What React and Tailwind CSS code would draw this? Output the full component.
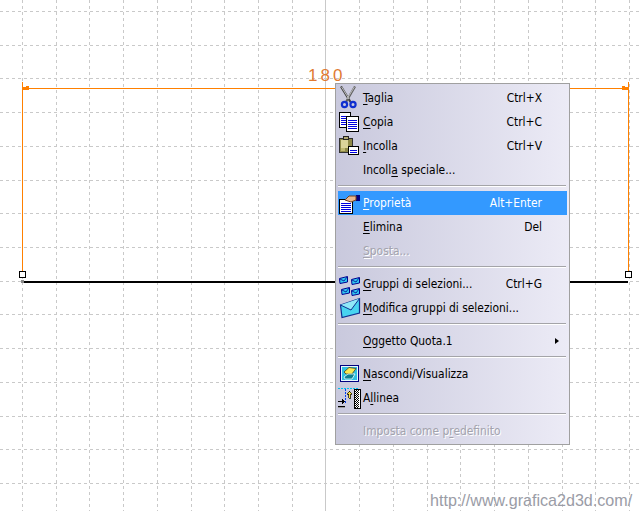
import React from "react";

const STEP = 33.72;
const vLines = Array.from({ length: 19 }, (_, i) => Math.round(22 + i * STEP));
const hLines = Array.from({ length: 15 }, (_, i) => Math.round(11 + i * STEP));

function Canvas() {
  return (
    <svg width="641" height="511" className="block" shapeRendering="crispEdges">
      {vLines.map((x) => (
        <line key={x} x1={x + 0.5} x2={x + 0.5} y1="0" y2="511" stroke="#c9c9c9" strokeDasharray={x === 325 ? undefined : "3 3"} />
      ))}
      {hLines.map((y) => (
        <line key={y} x1="0" x2="641" y1={y + 0.5} y2={y + 0.5} stroke="#c9c9c9" strokeDasharray={y === 113 || y === 450 ? undefined : "3 3"} />
      ))}
      <rect x="22" y="82" width="1" height="189" fill="#ff8000" />
      <rect x="628" y="82" width="1" height="189" fill="#ff8000" />
      <rect x="22" y="88" width="607" height="1" fill="#ff8000" />
      <rect x="23" y="87" width="6" height="3" fill="#ff8000" />
      <rect x="26" y="86" width="3" height="1" fill="#ff8000" />
      <rect x="622" y="87" width="6" height="3" fill="#ff8000" />
      <rect x="622" y="86" width="3" height="1" fill="#ff8000" />
      <rect x="24" y="281" width="604" height="2" fill="#000" />
      <rect x="21" y="280" width="3" height="3" fill="#8a8a8a" />
      <rect x="19.5" y="271.5" width="6" height="6" fill="#fff" stroke="#000" />
      <rect x="625.5" y="271.5" width="6" height="6" fill="#fff" stroke="#000" />
    </svg>
  );
}

const Blue = ({ x, y, w }) => <rect x={x} y={y} width={w} height="1" fill="#0000e0" />;

function Doc({ x, y, w, h }) {
  const lines = [];
  for (let ly = y + 4; ly < y + h - 1; ly += 2) lines.push(<Blue key={ly} x={x + 2} y={ly} w={w - 3} />);
  return (
    <g>
      <rect x={x + 0.5} y={y + 0.5} width={w} height={h} fill="#fff" stroke="#000" />
      {lines}
    </g>
  );
}

const Scissors = () => (
  <g fill="none">
    <path d="M3 0.5 L12.5 16" stroke="#404040" strokeWidth="2.2" />
    <path d="M17 0.5 L8 16" stroke="#606060" strokeWidth="2.2" />
    <path d="M3.6 1 L11 13" stroke="#e0e0e0" strokeWidth="0.8" />
    <path d="M16.4 1 L9 13" stroke="#d0d0d0" strokeWidth="0.8" />
    <circle cx="6.5" cy="18.5" r="2.6" stroke="#1030d0" strokeWidth="2.2" />
    <circle cx="15" cy="18.5" r="2.6" stroke="#1030d0" strokeWidth="2.2" />
  </g>
);

const CopyIcon = () => (
  <g shapeRendering="crispEdges">
    <Doc x={1} y={2} w={11} h={15} />
    <Doc x={8} y={6} w={12} h={15} />
  </g>
);

const PasteIcon = () => (
  <g shapeRendering="crispEdges">
    <rect x="1.5" y="4.5" width="13" height="14" fill="#8f8a48" stroke="#333" />
    <rect x="3" y="6" width="7" height="8" fill="#dcd49a" />
    <rect x="3" y="14" width="4" height="3" fill="#c0b870" />
    <rect x="5.5" y="2.5" width="5" height="3" fill="#b0a870" stroke="#222" />
    <Doc x={10} y={12} w={10} h={8} />
  </g>
);

const PropsIcon = () => (
  <g shapeRendering="crispEdges">
    <Doc x={1} y={8} w={13} h={14} />
    <rect x="18" y="4" width="4" height="6" fill="#000080" />
    <path d="M7 9 L11 5 L18 5 L18 9 L13 11 Z" fill="#e8b890" stroke="#704020" strokeWidth="1" shapeRendering="auto" />
  </g>
);

const Mini = ({ x, y }) => (
  <g>
    <path d={`M${x + 0.5} ${y + 2.5} L${x + 8.5} ${y + 0.5} L${x + 8.5} ${y + 6} L${x + 1} ${y + 7.5} Z`} fill="#30c8f0" stroke="#000090" />
    <path d={`M${x + 1} ${y + 3} L${x + 5} ${y + 5} L${x + 8} ${y + 1}`} stroke="#000090" fill="none" strokeWidth="0.8" />
  </g>
);

const GroupsIcon = () => (
  <g>
    <Mini x={1} y={4} />
    <Mini x={13} y={5} />
    <Mini x={3} y={15} />
    <Mini x={13} y={16} />
  </g>
);

const EnvelopeIcon = () => (
  <g>
    <path d="M2.5 9 L21.5 2.5 L21.5 17 L4 21.5 Z" fill="#48d4f0" stroke="#103090" strokeWidth="1.2" />
    <path d="M2.5 9 L13 14 L21.5 2.5" fill="#90e8f8" stroke="#103090" strokeWidth="1" />
  </g>
);

const HideIcon = () => (
  <g>
    <rect x="2.5" y="3.5" width="18" height="16" fill="#30c0e0" stroke="#000080" />
    <rect x="3.5" y="4.5" width="16" height="14" fill="none" stroke="#e8f8ff" />
    <path d="M6 10 L11 5.5 L18 6.5 L14 12 L8 12 Z" fill="#f8e850" stroke="#404020" strokeWidth="0.8" />
    <path d="M6 15 L10 12 L17 12 L14 17 L7 17 Z" fill="#108090" stroke="#f0ffff" strokeWidth="0.8" />
  </g>
);

const checker = [];
for (let cy = 4; cy < 22; cy++) {
  for (let cx = 17; cx < 21; cx++) {
    if ((cx + cy) % 2 === 0) checker.push([cx, cy]);
  }
}

const AlignIcon = () => (
  <g shapeRendering="crispEdges">
    <line x1="0" x2="20" y1="2.5" y2="2.5" stroke="#00c0f0" strokeDasharray="2 1" />
    <line x1="7.5" x2="7.5" y1="3" y2="17" stroke="#0040f0" strokeDasharray="2 1" />
    <line x1="0" x2="8" y1="15.5" y2="15.5" stroke="#0040f0" strokeDasharray="2 1" />
    <path d="M9 8 L11.5 5 L14 8 L12.5 8 L12.5 12 L10.5 12 L10.5 8 Z" fill="#ffe040" stroke="#000" strokeWidth="0.7" />
    <rect x="16" y="3" width="6" height="19" fill="#fff" stroke="#000" strokeWidth="1" />
    {checker.map(([cx, cy]) => (
      <rect key={`${cx}-${cy}`} x={cx} y={cy} width="1" height="1" fill="#000" />
    ))}
    <rect x="0" y="15" width="5" height="1" fill="#000" />
    <path d="M4 13 L7 15.5 L4 18 Z" fill="#000" />
    <rect x="0" y="20" width="7" height="1" fill="#000" />
    <rect x="0" y="21" width="7" height="1" fill="#999" />
  </g>
);

const ICONS = {
  cut: Scissors,
  copy: CopyIcon,
  paste: PasteIcon,
  props: PropsIcon,
  groups: GroupsIcon,
  envelope: EnvelopeIcon,
  hide: HideIcon,
  align: AlignIcon,
};

function Label({ before = "", u, after = "" }) {
  return (
    <>
      {before}
      <u className="underline underline-offset-2">{u}</u>
      {after}
    </>
  );
}

function Row({ icon, label, shortcut, active, disabled, arrow }) {
  const Icon = ICONS[icon];
  const tone = active
    ? "bg-[#3399ff] text-white"
    : disabled
      ? "text-[#a3a3ad] [text-shadow:1px_1px_0_#ffffff]"
      : "text-black";
  return (
    <div className={`relative flex h-6 items-center ${tone}`}>
      <div className="h-6 w-6 shrink-0">
        {Icon && (
          <svg width="24" height="24" viewBox="0 0 24 24">
            <Icon />
          </svg>
        )}
      </div>
      <div className="ml-px flex-1 whitespace-nowrap">
        <Label {...label} />
      </div>
      {shortcut && <div className="pr-[25px] whitespace-nowrap">{shortcut}</div>}
      {arrow && <div className="mr-2 h-0 w-0 border-y-[3.5px] border-l-4 border-y-transparent border-l-black" />}
    </div>
  );
}

function Sep() {
  return (
    <div className="flex h-[9px] flex-col pt-[3px] pr-px">
      <div className="h-px bg-[#a4a4a8]" />
      <div className="h-px bg-[#ffffff]" />
    </div>
  );
}

function Menu() {
  return (
    <div
      className="absolute top-[83px] left-[335px] h-[362px] w-[235px] border border-[#a0a0a0] bg-gradient-to-r from-[#c9c9dd] to-[#ecebf6] p-[2px] text-[11.9px] leading-6"
      style={{ fontFamily: '"DejaVu Sans", sans-serif', fontStretch: "condensed" }}
    >
      <Row icon="cut" label={{ u: "T", after: "aglia" }} shortcut="Ctrl+X" />
      <Row icon="copy" label={{ u: "C", after: "opia" }} shortcut="Ctrl+C" />
      <Row icon="paste" label={{ u: "I", after: "ncolla" }} shortcut="Ctrl+V" />
      <Row label={{ before: "Incoll", u: "a", after: " speciale..." }} />
      <Sep />
      <Row icon="props" active label={{ u: "P", after: "roprietà" }} shortcut="Alt+Enter" />
      <Row label={{ u: "E", after: "limina" }} shortcut="Del" />
      <Row disabled label={{ u: "S", after: "posta..." }} />
      <Sep />
      <Row icon="groups" label={{ u: "G", after: "ruppi di selezioni..." }} shortcut="Ctrl+G" />
      <Row icon="envelope" label={{ u: "M", after: "odifica gruppi di selezioni..." }} />
      <Sep />
      <Row arrow label={{ u: "O", after: "ggetto Quota.1" }} />
      <Sep />
      <Row icon="hide" label={{ u: "N", after: "ascondi/Visualizza" }} />
      <Row icon="align" label={{ before: "A", u: "l", after: "linea" }} />
      <Sep />
      <Row disabled label={{ before: "Imposta come p", u: "r", after: "edefinito" }} />
    </div>
  );
}

export default function App() {
  return (
    <div className="relative h-[511px] w-[641px] overflow-hidden bg-white">
      <Canvas />
      <div className="absolute top-[66px] left-[308px] font-['Liberation_Sans',sans-serif] text-[17px] leading-5 tracking-[3px] text-[#e07a32]">
        180
      </div>
      <Menu />
      <div className="absolute top-[490px] left-[430px] font-['Liberation_Sans',sans-serif] text-[16.1px] leading-5 text-[#9a9ca6]">
        http://www.grafica2d3d.com/
      </div>
    </div>
  );
}
